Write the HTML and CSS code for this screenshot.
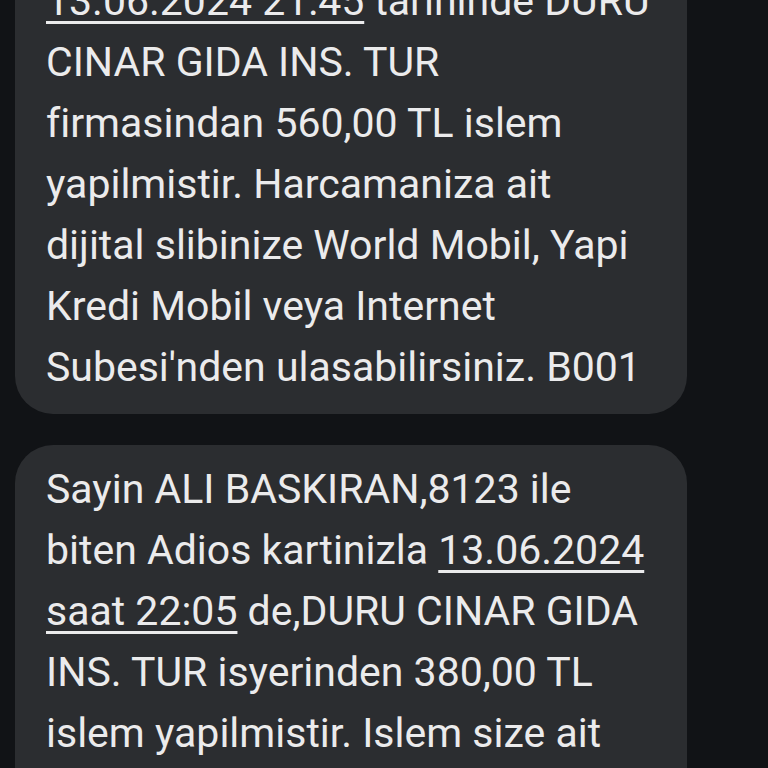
FILE: index.html
```html
<!DOCTYPE html>
<html lang="tr">
<head>
<meta charset="utf-8">
<link rel="stylesheet" href="styles.css">
</head>
<body>
<main class="thread">
  <div class="bubble first">
    <p class="msg"><span class="link">13.06.2024 21:45</span> tarihinde DURU<br>CINAR GIDA INS. TUR<br>firmasindan 560,00 TL islem<br>yapilmistir. Harcamaniza ait<br>dijital slibinize World Mobil, Yapi<br>Kredi Mobil veya Internet<br>Subesi'nden ulasabilirsiniz. B001</p>
  </div>
  <div class="bubble continues">
    <p class="msg">Sayin ALI BASKIRAN,8123 ile<br>biten Adios kartinizla <span class="link">13.06.2024<br>saat 22:05</span> de,DURU CINAR GIDA<br>INS. TUR isyerinden 380,00 TL<br>islem yapilmistir. Islem size ait</p>
  </div>
</main>
</body>
</html>
```
FILE: styles.css
```css
html, body {
  margin: 0;
  padding: 0;
  background: #111316;
  height: 100%;
  overflow: hidden;
}
.thread {
  display: flex;
  flex-direction: column;
  gap: 31px;
  width: 672px;
  margin-left: 15px;
  margin-top: -43px;
}
.bubble {
  background: #2b2d30;
  border-radius: 38px;
  padding: 14px 20px 16px 31px;
}
.bubble.continues {
  padding-bottom: 90px;
}
.msg {
  margin: 0;
  font-family: Roboto, "Noto Sans", sans-serif;
  font-size: 41px;
  line-height: 61px;
  color: #ebebec;
  white-space: nowrap;
}
.link {
  text-decoration: underline;
  text-decoration-thickness: 3px;
  text-underline-offset: 6px;
}
```
